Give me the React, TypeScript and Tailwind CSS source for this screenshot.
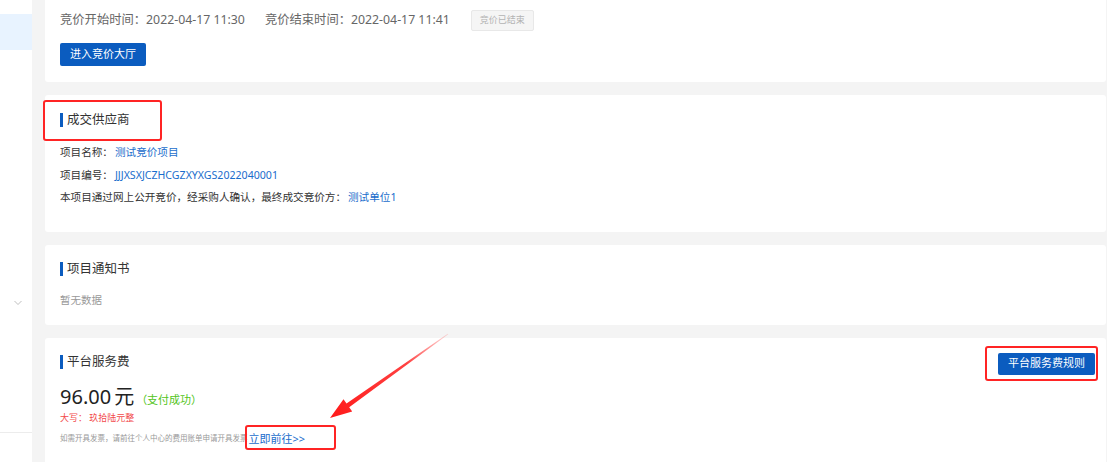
import React from 'react';

function RedBox({ className }: { className: string }) {
  return <div className={`absolute border-2 border-[#ff2424] rounded-[3px] pointer-events-none ${className}`} />;
}

function SectionTitle({ text }: { text: string }) {
  return (
    <div className="flex items-center h-[16px]">
      <span className="w-[3px] h-[14px] bg-[#0b5cbf] mr-[4px]" />
      <span className="text-[12.5px] text-[#333]">{text}</span>
    </div>
  );
}

function Arrow() {
  return (
    <svg className="absolute top-0 left-0 pointer-events-none" width="1107" height="462" viewBox="0 0 1107 462">
      <defs>
        <linearGradient id="arrowFade" x1="448" y1="334" x2="330" y2="418" gradientUnits="userSpaceOnUse">
          <stop offset="0" stopColor="#ff2020" stopOpacity="0.15" />
          <stop offset="0.35" stopColor="#ff2020" stopOpacity="0.85" />
          <stop offset="1" stopColor="#ff1a1a" stopOpacity="1" />
        </linearGradient>
      </defs>
      <polygon
        points="448.3,334.3 349.2,407.2 352.2,411.4 330,418 343.5,399.2 346.5,403.5 447.7,333.7"
        fill="url(#arrowFade)"
      />
    </svg>
  );
}

export default function App() {
  return (
    <div className="relative w-[1107px] h-[462px] overflow-hidden flex font-['Noto_Sans','Noto_Sans_CJK_SC',sans-serif]">
      {/* side menu */}
      <div className="w-[32px] shrink-0 bg-white flex flex-col">
        <div className="mt-[14px] h-[36px] bg-[#e8f3ff]" />
        <svg className="mt-[250px] ml-[14px]" width="8" height="6" viewBox="0 0 8 6">
          <path d="M0.5 1 L4 4.5 L7.5 1" fill="none" stroke="#b8b8b8" strokeWidth="0.9" />
        </svg>
        <div className="mt-[126px] h-[1px] bg-[#ececec]" />
      </div>

      {/* content */}
      <div className="flex-1 bg-[#f4f4f4] pl-[13px] pr-[1px] flex flex-col gap-[13px]">
        {/* bidding */}
        <div className="bg-white h-[82px] shrink-0 pl-[15px] pt-[9px] rounded-b-[3px]">
          <div className="flex items-center h-[22px] text-[12.3px] text-[#666]">
            <span>竞价开始时间：2022-04-17 11:30</span>
            <span className="ml-[20px]">竞价结束时间：2022-04-17 11:41</span>
            <span className="ml-[21px] h-[21px] px-[8px] bg-[#f5f5f5] border border-[#e8e8e8] rounded-[2px] text-[9px] text-[#b3b3b3] flex items-center">
              竞价已结束
            </span>
          </div>
          <button className="mt-[12px] h-[23px] w-[86px] bg-[#0b5cbf] text-white text-[11px] rounded-[2px]">
            进入竞价大厅
          </button>
        </div>

        {/* supplier */}
        <div className="relative bg-white h-[137px] shrink-0 pl-[15px] pt-[17px] rounded-[3px]">
          <SectionTitle text="成交供应商" />
          <div className="mt-[14px] flex flex-col text-[10.6px] text-[#333]">
            <div className="h-[22.5px] flex items-center">
              <span>项目名称：</span>
              <span className="ml-[2px] text-[#1a6dcc]">测试竞价项目</span>
            </div>
            <div className="h-[22.5px] flex items-center">
              <span>项目编号：</span>
              <span className="ml-[2px] text-[#1a6dcc]">JJJXSXJCZHCGZXYXGS2022040001</span>
            </div>
            <div className="h-[22.5px] flex items-center">
              <span>本项目通过网上公开竞价，经采购人确认，最终成交竞价方：</span>
              <span className="ml-[2px] text-[#1a6dcc]">测试单位1</span>
            </div>
          </div>
          <RedBox className="left-[-2px] top-[5px] w-[119px] h-[41px]" />
        </div>

        {/* notice */}
        <div className="bg-white h-[80px] shrink-0 pl-[15px] pt-[16px] rounded-[3px]">
          <SectionTitle text="项目通知书" />
          <div className="mt-[16px] h-[16px] flex items-center text-[10.5px] text-[#999]">暂无数据</div>
        </div>

        {/* service fee */}
        <div className="relative flex-1 bg-white pl-[15px] pr-[11px] pt-[13px] rounded-t-[3px]">
          <div className="h-[22px] flex items-center justify-between">
            <SectionTitle text="平台服务费" />
            <div className="relative">
              <button className="h-[22px] w-[97px] bg-[#0b5cbf] text-white text-[11px] rounded-[2px]">
                平台服务费规则
              </button>
              <RedBox className="left-[-13px] right-[-3px] top-[-3px] bottom-[-6px]" />
            </div>
          </div>
          <div className="mt-[11px] h-[26px] flex items-baseline">
            <span className="text-[20px] text-[#222] leading-[26px]">96.00</span>
            <span className="ml-[3px] text-[20px] text-[#222] leading-[26px]">元</span>
            <span className="ml-[2px] text-[11px] text-[#52c41a]">（支付成功）</span>
          </div>
          <div className="mt-[1px] h-[14px] flex items-center text-[9px] text-[#f24a4a]">大写： 玖拾陆元整</div>
          <div className="mt-[6px] h-[16px] flex items-center">
            <span className="text-[7.5px] text-[#999]">如需开具发票，请前往个人中心的费用账单申请开具发票</span>
            <span className="relative ml-[1px] text-[11px] text-[#1a6dcc]">
              立即前往&gt;&gt;
              <RedBox className="left-[-4px] top-[-6px] w-[91px] h-[25px]" />
            </span>
          </div>
        </div>
      </div>

      <Arrow />
    </div>
  );
}
